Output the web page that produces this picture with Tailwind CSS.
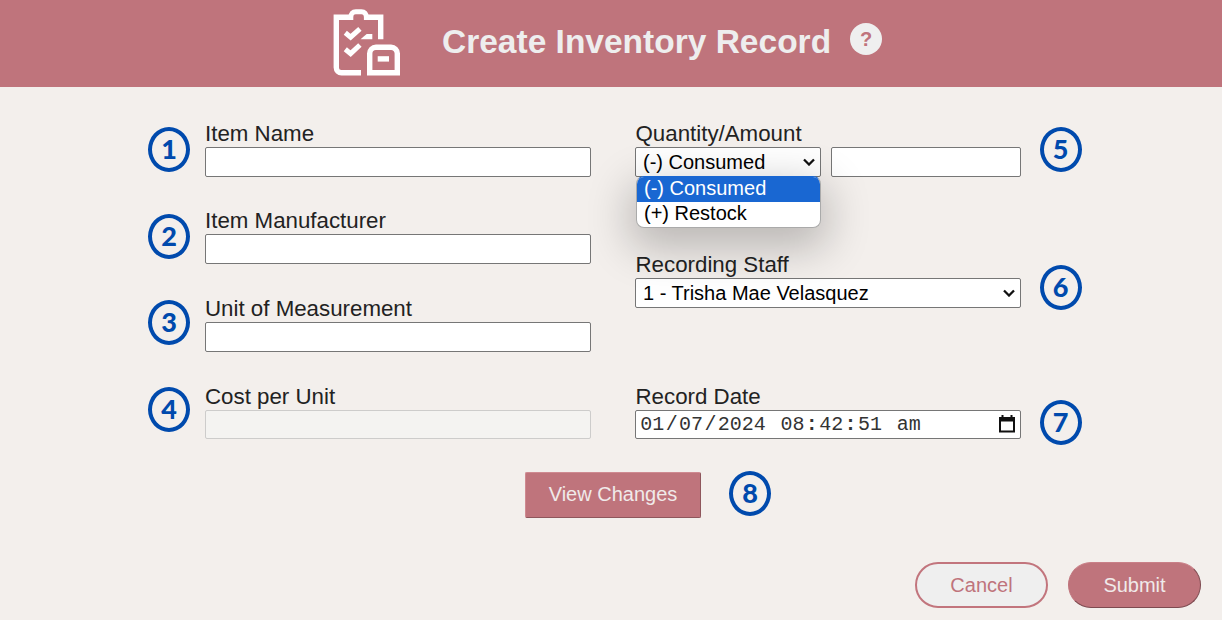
<!DOCTYPE html>
<html lang="en">
<head>
<meta charset="utf-8">
<title>Create Inventory Record</title>
<script src="https://cdn.jsdelivr.net/npm/@tailwindcss/browser@4"></script>
</head>
<body class="w-[1222px] h-[620px] overflow-hidden bg-[#f3efec] font-['Liberation_Sans',Arial,sans-serif] text-[#222] flex flex-col">
<header class="h-[87px] shrink-0 bg-[#bf747c] flex items-start pl-[332px]">
  <svg class="mt-2 w-[70px] h-[70px] shrink-0" viewBox="332 8 70 70" fill="none" stroke="#fff" stroke-width="5.4">
    <path d="M361 72.800h-19.500a5.200 5.200 0 0 1-5.200-5.200V17.200h16M365 17.200h15.700v22.100"/>
    <path d="M350.800 19.900v-2.400c0-3.800 2-5.800 5-5.800h5.600c3 0 5 2 5 5.800v2.400" stroke-width="5"/>
    <path d="M345.300 32.800l5.300 4.300 9.300-8.300M345.300 49.300l5.300 4.300 9.300-8.600" stroke-width="5"/>
    <path d="M360.500 39.300l6.200-5.400h5.600v5.400z" fill="#fff" stroke="none"/>
    <path d="M369.700 72.800V53.500a6.200 6.200 0 0 1 6.200-6.200h15.200a6.200 6.200 0 0 1 6.200 6.200v19.300z"/>
    <path d="M377.700 58.900h11.300"/>
  </svg>
  <h1 class="ml-[40px] mt-[22px] text-[33.5px] leading-[40px] font-bold text-[#eee] whitespace-nowrap w-[408px]">Create Inventory Record</h1>
  <span class="mt-[23px] size-8 rounded-full bg-[#efefef] text-[#bf747c] font-bold text-[20px] leading-[32px] text-center">?</span>
</header>
<main class="h-[371px] shrink-0 flex">
  <div class="ml-[148px] w-[42px] pt-[40px] flex flex-col gap-[41.500px] shrink-0 font-['Lato',sans-serif] font-black text-[27px] text-[#004aad] text-center leading-[35px]">
    <span class="h-[45px] border-4 border-[#004aad] rounded-[50%]">1</span>
    <span class="h-[45px] border-4 border-[#004aad] rounded-[50%]">2</span>
    <span class="h-[45px] border-4 border-[#004aad] rounded-[50%]">3</span>
    <span class="h-[45px] border-4 border-[#004aad] rounded-[50%]">4</span>
  </div>
  <div class="ml-[15px] w-[386px] shrink-0 pt-[31px] text-[22.3px] leading-[31px]">
    <div class="h-[87px]"><p class="h-[29px]">Item Name</p><div class="h-[30px] bg-white border border-[#767676] rounded-[2px]"></div></div>
    <div class="h-[88px]"><p class="h-[29px]">Item Manufacturer</p><div class="h-[30px] bg-white border border-[#767676] rounded-[2px]"></div></div>
    <div class="h-[88px]"><p class="h-[29px]">Unit of Measurement</p><div class="h-[30px] bg-white border border-[#767676] rounded-[2px]"></div></div>
    <div><p class="h-[29px]">Cost per Unit</p><div class="h-[29px] bg-[#f4f3f1] border border-[#cdcccb] rounded-[2px]"></div></div>
  </div>
  <div class="ml-[44px] w-[386px] shrink-0 pt-[31px] text-[22.3px] leading-[31px]">
    <div class="h-[131px]">
      <p class="h-[29px] pl-[0.5px]">Quantity/Amount</p>
      <div class="flex gap-[10px] text-[20px] leading-[28px] text-black">
        <div class="relative w-[186px] h-[30px] bg-white border border-[#767676] rounded-[2px] pl-[7px] pr-[5px] flex items-center justify-between">
          <span>(-) Consumed</span>
          <svg class="w-3 h-2" viewBox="0 0 12 8" fill="none" stroke="#111" stroke-width="2.300"><path d="M1 1.500l5 5 5-5"/></svg>
          <div class="absolute left-0 top-[28px] w-[185px] h-[52px] rounded-[8px] bg-white border border-[#aaa] border-t-[#1967d2] overflow-hidden shadow-[0_14px_44px_6px_rgba(0,0,0,0.24)]">
            <div class="h-[25px] pl-[7px] bg-[#1967d2] text-white leading-[23px]">(-) Consumed</div>
            <div class="h-[25px] pl-[7px] leading-[23px]">(+) Restock</div>
          </div>
        </div>
        <div class="w-[190px] h-[30px] bg-white border border-[#767676] rounded-[2px]"></div>
      </div>
    </div>
    <div class="h-[132px]">
      <p class="h-[29px] pl-[0.5px]">Recording Staff</p>
      <div class="h-[30px] bg-white border border-[#767676] rounded-[2px] pl-[7px] pr-[5px] flex items-center justify-between text-[20px] leading-[28px] text-black">
        <span>1 - Trisha Mae Velasquez</span>
        <svg class="w-3 h-2" viewBox="0 0 12 8" fill="none" stroke="#111" stroke-width="2.300"><path d="M1 1.500l5 5 5-5"/></svg>
      </div>
    </div>
    <div>
      <p class="h-[29px] pl-[0.5px]">Record Date</p>
      <div class="h-[29px] bg-white border border-[#767676] rounded-[2px] pl-[3px] pr-[5px] flex items-center justify-between text-black">
        <div class="font-['Liberation_Mono',monospace] text-[20px] leading-[27px] whitespace-pre text-[#333]"><span class="px-[1.350px]">01</span>/<span class="px-[1.350px]">07</span>/<span class="px-[1.350px]">2024</span> <span class="px-[1.350px]">08</span><b>:</b><span class="px-[1.350px]">42</span><b>:</b><span class="px-[1.350px]">51</span> <span class="px-[1.350px]">am</span></div>
        <svg class="w-4 h-[18px] -mt-0.5" viewBox="0 0 16 18" fill="none"><path d="M1 3h14v13.500H1z" stroke="#111" stroke-width="2"/><path d="M0 2h16v4.500H0zM2.500 0h2v3h-2zM11.500 0h2v3h-2z" fill="#111"/></svg>
      </div>
    </div>
  </div>
  <div class="ml-[18.500px] w-[42px] pt-[40px] flex flex-col shrink-0 font-['Lato',sans-serif] font-black text-[27px] text-[#004aad] text-center leading-[35px]">
    <span class="h-[45px] border-4 border-[#004aad] rounded-[50%]">5</span>
    <span class="mt-[93px] h-[45px] border-4 border-[#004aad] rounded-[50%]">6</span>
    <span class="mt-[90px] h-[45px] border-4 border-[#004aad] rounded-[50%]">7</span>
  </div>
</main>
<div class="h-[104px] shrink-0 pl-[525px] pt-[14px] flex items-start">
  <button class="w-[176px] h-[46px] pb-0.5 bg-[#bf747c] border border-t-[#cf8a91] border-l-[#cf8a91] border-b-[#8e565c] border-r-[#8e565c] rounded-[2px] text-[20px] text-[#f0eaea]">View Changes</button>
  <span class="ml-[28px] -mt-px w-[42px] h-[45px] border-4 border-[#004aad] rounded-[50%] font-['Lato',sans-serif] font-black text-[27px] text-[#004aad] text-center leading-[35px]">8</span>
</div>
<footer class="flex justify-end gap-5 pr-[21px] text-[20px]">
  <button class="w-[133px] h-[46px] rounded-full border-2 border-[#c2757d] bg-[#efefef] text-[#bf747c]">Cancel</button>
  <button class="w-[133px] h-[46px] rounded-full border border-t-[#c98088] border-l-[#bf747c] border-b-[#7d4a50] border-r-[#7d4a50] bg-[#bf747c] text-[#f0eaea]">Submit</button>
</footer>
</body>
</html>
